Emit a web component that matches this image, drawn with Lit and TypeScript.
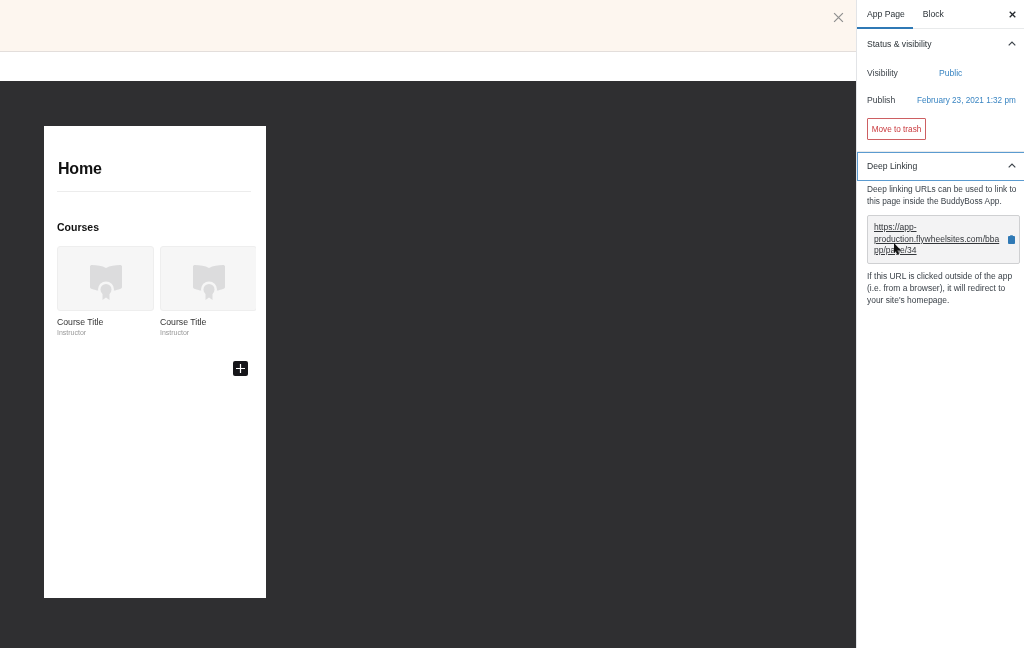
import { LitElement, html, css, svg } from "lit";
import { customElement } from "lit/decorators.js";

const chevron = html`<svg class="chev" width="8" height="5" viewBox="0 0 8 5"><path d="M.7 4.300L4 1l3.300 3.300" fill="none" stroke="#3c434a" stroke-width="1.200"/></svg>`;
const x = (s: number, c: string, w: number) => html`<svg width="${s}" height="${s}" viewBox="0 0 10 10"><path d="M1 1l8 8M9 1l-8 8" fill="none" stroke="${c}" stroke-width="${w}"/></svg>`;
const courseIcon = svg`<svg class="ci" width="34" height="36" viewBox="0 0 34 36">
  <path d="M1 2.500C1 1.500 2 1 3 1c5 0 10 .800 14 3C21 1.800 26 1 31 1c1 0 2 .500 2 1.500V23c0 1-.800 1.700-2 2-2 .500-4 1-5 1.500H8C7 26 5 25.500 3 25c-1.200-.300-2-1-2-2z" fill="#dcdcdd"/>
  <circle cx="17" cy="25.500" r="8" fill="#f6f6f6"/>
  <path d="M13.500 28v8l3.500-2.500 3.500 2.500v-8z" fill="#dcdcdd"/>
  <circle cx="17" cy="25.500" r="5.500" fill="#dcdcdd"/>
</svg>`;

@customElement("app-root")
export class AppRoot extends LitElement {
  static styles = css`
    :host { display: flex; width: 1024px; height: 648px; overflow: hidden; font-family: "Liberation Sans", Arial, sans-serif; background: #fff; color: #3c434a; filter: blur(.3px); }
    .main { width: 856px; display: flex; flex-direction: column; flex: none; }
    .notice { height: 52px; background: #fdf6ef; border-bottom: 1px solid #e3dedb; display: flex; justify-content: flex-end; align-items: flex-start; padding: 12px 12px 0 0; box-sizing: border-box; flex: none; }
    .notice svg { display: block; }
    .bar { height: 29px; background: #fff; flex: none; }
    .canvas { flex: 1; background: #2f2f31; padding: 45px 0 0 44px; }
    .page { width: 222px; height: 472px; background: #fff; padding: 34px 14px 0 13px; box-sizing: border-box; display: flex; flex-direction: column; color: #111; }
    h1 { margin: 0; font-size: 16px; letter-spacing: -.2px; line-height: 17px; font-weight: 700; padding-bottom: 14px; border-bottom: 1px solid #ececec; margin-right: 1px; padding-left: 1px; }
    h2 { margin: 29px 0 13px; font-size: 10.500px; line-height: 12px; font-weight: 700; }
    .courses { display: flex; gap: 6px; width: 199px; overflow: hidden; }
    .course { flex: none; width: 97px; }
    .thumb { height: 65px; background: #f6f6f6; border: 1px solid #eeeeee; border-radius: 3px; box-sizing: border-box; display: flex; align-items: center; justify-content: center; }
    .ci { display: block; margin-top: 7px; }
    .ct { font-size: 8.700px; line-height: 10px; margin-top: 6px; color: #333; }
    .ci2 { font-size: 7px; line-height: 8px; margin-top: 2px; color: #999; }
    .add { align-self: flex-end; margin: 24px 4px 0 0; width: 15px; height: 15px; background: #16161a; border-radius: 2px; display: flex; align-items: center; justify-content: center; }
    .add svg { display: block; }
    .side { flex: 1; border-left: 1px solid #e2e4e7; font-size: 8.600px; display: flex; flex-direction: column; min-width: 0; }
    .tabs { height: 28px; display: flex; align-items: center; border-bottom: 1px solid #e8eaeb; position: relative; padding: 0 8px 0 10px; flex: none; color: #2c3338; }
    .tab { margin-right: 18px; }
    .tab.on::after { content: ""; position: absolute; left: 0; bottom: -1px; width: 56px; height: 2px; background: #2f79b5; }
    .tabs .close { margin-left: auto; display: block; }
    .close svg { display: block; }
    .panel-h { height: 29px; display: flex; align-items: center; justify-content: space-between; padding: 0 8px 0 10px; flex: none; color: #2c3338; }
    .panel-h .chev { display: block; }
    .status { padding-bottom: 11px; border-bottom: 1px solid #e8eaeb; }
    .row { display: grid; grid-template-columns: 49px 1fr; padding-left: 10px; align-items: center; height: 12px; margin-top: 9px; }
    .row + .row { margin-top: 15px; }
    .blue { color: #3a85c2; white-space: nowrap; }
    .date { font-size: 8.200px; padding-left: 1px; }
    .v1 { padding-left: 23px; }
    .trash { margin: 12px 0 0 10px; width: 59px; height: 22px; box-sizing: border-box; border: 1px solid #cd5f62; border-radius: 1px; color: #c9383c; font-size: 8.200px; display: flex; align-items: center; justify-content: center; white-space: nowrap; }
    .panel-h.deep { border: 1px solid #5b9bd0; border-right: 0; box-sizing: border-box; padding: 0 8px 2px 9px; }
    .body { padding: 0 5px 0 10px; }
    .body p { margin: 0; line-height: 12px; white-space: nowrap; }
    .intro { padding-top: 2px; font-size: 8.300px; }
    .url { margin: 8px -1px 0 0; height: 49px; width: 153px; box-sizing: border-box; border: 1px solid #cfd0d2; border-radius: 2px; background: #f3f3f4; padding: 6px; position: relative; display: flex; color: #33363a; font-size: 8.500px; }
    .url span { text-decoration: underline; line-height: 11.500px; display: block; white-space: nowrap; }
    .clip { position: absolute; right: 4px; top: 19px; display: block; }
    .cursor { position: absolute; left: 25px; top: 27px; display: block; }
    .body p.after { margin-top: 6px; font-size: 8.450px; }
  `;

  render() {
    const course = html`<div class="course">
      <div class="thumb">${courseIcon}</div>
      <div class="ct">Course Title</div>
      <div class="ci2">Instructor</div>
    </div>`;
    return html`
      <div class="main">
        <div class="notice">${x(11, "#8f8f8f", 1.1)}</div>
        <div class="bar"></div>
        <div class="canvas">
          <div class="page">
            <h1>Home</h1>
            <h2>Courses</h2>
            <div class="courses">${course}${course}</div>
            <div class="add"><svg width="9" height="9" viewBox="0 0 9 9"><path d="M4.500 0v9M0 4.500h9" stroke="#fff" stroke-width="1.200"/></svg></div>
          </div>
        </div>
      </div>
      <div class="side">
        <div class="tabs">
          <span class="tab on">App Page</span><span class="tab">Block</span>
          <span class="close">${x(7, "#23282d", 1.800)}</span>
        </div>
        <div class="status">
          <div class="panel-h"><span>Status &amp; visibility</span>${chevron}</div>
          <div class="row"><span>Visibility</span><span class="blue v1">Public</span></div>
          <div class="row"><span>Publish</span><span class="blue date">February 23, 2021 1:32 pm</span></div>
          <div class="trash">Move to trash</div>
        </div>
        <div class="panel-h deep"><span>Deep Linking</span>${chevron}</div>
        <div class="body">
          <p class="intro">Deep linking URLs can be used to link to<br>this page inside the BuddyBoss App.</p>
          <div class="url">
            <span>https://app-<br>production.flywheelsites.com/bba<br>pp/page/34</span>
            <svg class="clip" width="7" height="9" viewBox="0 0 8 10"><path d="M2.500 0h3v1H7a1 1 0 0 1 1 1v7a1 1 0 0 1-1 1H1a1 1 0 0 1-1-1V2a1 1 0 0 1 1-1h1.500z" fill="#2f79b5"/></svg>
            <svg class="cursor" width="9" height="13" viewBox="0 0 9 13"><path d="M1 0l7 7.500H4.500L6 11l-1.500.8L3 8.300 1 10z" fill="#111"/></svg>
          </div>
          <p class="after">If this URL is clicked outside of the app<br>(i.e. from a browser), it will redirect to<br>your site's homepage.</p>
        </div>
      </div>
    `;
  }
}
